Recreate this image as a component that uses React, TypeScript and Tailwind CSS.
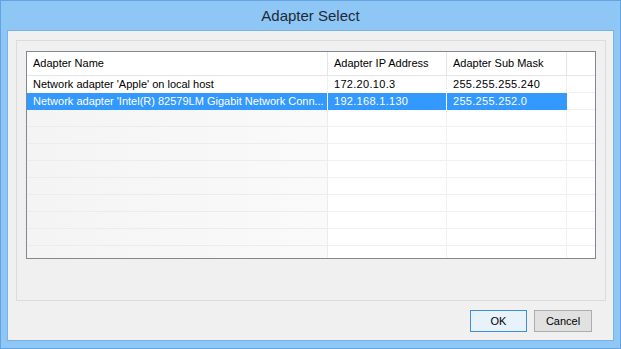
import React from 'react';

const rows = [
  { name: "Network adapter 'Apple' on local host", ip: '172.20.10.3', mask: '255.255.255.240' },
  { name: "Network adapter 'Intel(R) 82579LM Gigabit Network Conn...", ip: '192.168.1.130', mask: '255.255.252.0' },
];

const selectedIndex = 1;
const emptyRows = 9;

export default function App() {
  return (
    <div
      className="w-[621px] h-[349px] bg-[#8ec6f6] border border-[#63a4e0] flex flex-col text-[11px] text-black overflow-hidden"
      style={{ fontFamily: '"Liberation Sans", Arial, sans-serif' }}
    >
      {/* Title bar */}
      <div className="h-[29px] flex items-center justify-center text-[15px] text-[#1e2a38] pt-[1px]">
        Adapter Select
      </div>

      {/* Client area */}
      <div className="ml-[6px] mr-[6px] h-[311px] bg-[#f0f0f0] border border-[#79b2e6] flex flex-col">
        {/* Group box */}
        <div className="mt-[9px] ml-[8px] mr-[7px] h-[261px] border border-[#dcdcdc] flex flex-col">
          {/* List view */}
          <div className="mt-[10px] ml-[9px] mr-[9px] h-[208px] border border-[#828790] bg-white flex flex-col overflow-hidden">
            {/* Header */}
            <div className="flex h-[24px] border-b border-[#e5e5e5] shrink-0">
              <div className="w-[301px] border-r border-[#e5e5e5] pl-[6px] flex items-center">Adapter Name</div>
              <div className="w-[119px] border-r border-[#e5e5e5] pl-[6px] flex items-center">Adapter IP Address</div>
              <div className="w-[120px] border-r border-[#e5e5e5] pl-[6px] flex items-center">Adapter Sub Mask</div>
              <div className="flex-1" />
            </div>

            {rows.map((r, i) => {
              const sel = i === selectedIndex;
              return (
                <div key={i} className="flex h-[17px] shrink-0 leading-[17px]">
                  <div
                    className={`w-[301px] shrink-0 pl-[6px] whitespace-nowrap overflow-hidden border-r ${
                      sel ? 'bg-[#3399ff] text-white border-white' : 'border-[#f0f0f0]'
                    }`}
                  >
                    {r.name}
                  </div>
                  <div
                    className={`w-[119px] shrink-0 pl-[6px] whitespace-nowrap tracking-[0.3px] border-r ${
                      sel ? 'bg-[#3399ff] text-white border-white' : 'border-[#f0f0f0]'
                    }`}
                  >
                    {r.ip}
                  </div>
                  <div
                    className={`w-[120px] shrink-0 pl-[6px] whitespace-nowrap tracking-[0.3px] border-r ${
                      sel ? 'bg-[#3399ff] text-white border-[#3399ff]' : 'border-[#f0f0f0]'
                    }`}
                  >
                    {r.mask}
                  </div>
                  <div className="flex-1 border-b border-[#f0f0f0]" />
                </div>
              );
            })}

            {Array.from({ length: emptyRows }).map((_, i) => (
              <div key={i} className="flex h-[17px] shrink-0">
                <div className="w-[301px] border-b border-r border-[#ececec] bg-gradient-to-r from-[#f4f4f4] to-[#fafafa]" />
                <div className="w-[119px] border-b border-r border-[#f0f0f0]" />
                <div className="w-[120px] border-b border-r border-[#f0f0f0]" />
                <div className="flex-1 border-b border-[#f0f0f0]" />
              </div>
            ))}
          </div>
        </div>

        {/* Buttons */}
        <div className="flex justify-end gap-[7px] mt-[9px] mr-[21px]">
          <button className="w-[57px] h-[22px] border border-[#3c8fd8] bg-[#e8f2fb] flex items-center justify-center">
            OK
          </button>
          <button className="w-[58px] h-[22px] border border-[#adadad] bg-[#e1e1e1] flex items-center justify-center">
            Cancel
          </button>
        </div>
      </div>
    </div>
  );
}
